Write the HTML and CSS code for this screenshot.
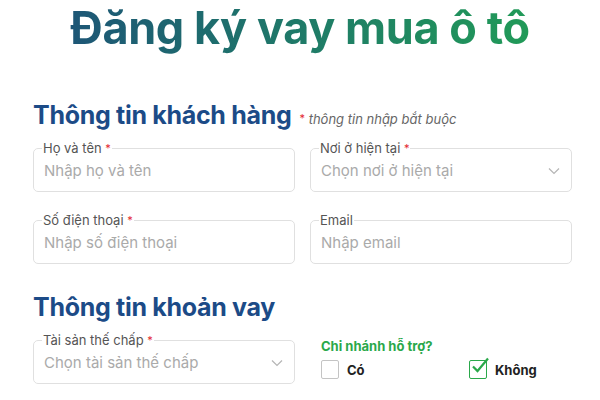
FILE: index.html
```html
<!DOCTYPE html>
<html lang="vi">
<head>
  <meta charset="UTF-8">
  <meta name="viewport" content="width=device-width, initial-scale=1.0">
  <title>Đăng ký vay mua ô tô</title>
  <link rel="stylesheet" href="styles.css">
</head>
<body>
  <h1 class="page-title"><span>Đăng ký vay mua ô tô</span></h1>

  <form class="loan-form">
    <div class="section-head">
      <h2>Thông tin khách hàng</h2>
      <span class="note"><i class="req">*</i> thông tin nhập bắt buộc</span>
    </div>

    <div class="grid">
      <fieldset class="field">
        <legend>Họ và tên <i class="req">*</i></legend>
        <input type="text" placeholder="Nhập họ và tên">
      </fieldset>
      <fieldset class="field">
        <legend>Nơi ở hiện tại <i class="req">*</i></legend>
        <div class="select">
          <span>Chọn nơi ở hiện tại</span>
          <svg width="12" height="8" viewBox="0 0 12 8"><path d="M1 1.5l5 5 5-5" fill="none" stroke="#b5b5b5" stroke-width="1.2"/></svg>
        </div>
      </fieldset>
      <fieldset class="field">
        <legend>Số điện thoại <i class="req">*</i></legend>
        <input type="text" placeholder="Nhập số điện thoại">
      </fieldset>
      <fieldset class="field">
        <legend>Email</legend>
        <input type="text" placeholder="Nhập email">
      </fieldset>
    </div>

    <div class="section-head section-loan">
      <h2>Thông tin khoản vay</h2>
    </div>

    <div class="grid">
      <fieldset class="field">
        <legend>Tài sản thế chấp <i class="req">*</i></legend>
        <div class="select">
          <span>Chọn tài sản thế chấp</span>
          <svg width="12" height="8" viewBox="0 0 12 8"><path d="M1 1.5l5 5 5-5" fill="none" stroke="#b5b5b5" stroke-width="1.2"/></svg>
        </div>
      </fieldset>
      <div class="support">
        <div class="support-title">Chi nhánh hỗ trợ?</div>
        <div class="choices">
          <label class="choice"><span class="box"></span>Có</label>
          <label class="choice"><span class="box checked"><svg width="22" height="20" viewBox="0 0 22 20"><path d="M5 10.5l4.5 4.5L20 2.5" fill="none" stroke="#2aa84a" stroke-width="2.2"/></svg></span>Không</label>
        </div>
      </div>
    </div>
  </form>
</body>
</html>
```

FILE: styles.css
```css
body {
  margin: 0;
  font-family: Inter, "Noto Sans", sans-serif;
  background: #fff;
}
.page-title {
  margin: 2px 0 0;
  text-align: center;
  font-size: 45px;
  line-height: 52px;
  font-weight: 700;
  letter-spacing: -0.4px;
}
.page-title span {
  background: linear-gradient(90deg, #1d5676 0%, #1f7a68 50%, #219a58 100%);
  -webkit-background-clip: text;
  background-clip: text;
  color: transparent;
}
.loan-form {
  padding: 0 28px 0 33px;
}
.section-head {
  display: flex;
  align-items: baseline;
  gap: 8px;
  margin-top: 45px;
}
.section-loan {
  margin-top: 27px;
}
.section-head h2 {
  margin: 0;
  font-size: 25px;
  line-height: 32px;
  font-weight: 700;
  color: #1c4b87;
  letter-spacing: -0.3px;
}
.note {
  font-size: 13px;
  font-style: italic;
  color: #666;
}
.req {
  color: #e3262f;
  font-style: normal;
  font-size: 11px;
  vertical-align: top;
}
.grid {
  display: grid;
  grid-template-columns: 262px 262px;
  column-gap: 15px;
  row-gap: 20px;
  margin-top: 9px;
}
.field {
  margin: 0;
  padding: 4px 10px 9px;
  border: 1px solid #e0e0e0;
  border-radius: 5px;
  min-width: 0;
}
.field legend {
  padding: 0 1px;
  margin-left: -2px;
  font-size: 13px;
  line-height: 16px;
  color: #555;
}
.field input {
  display: block;
  width: 100%;
  box-sizing: border-box;
  padding: 0;
  border: 0;
  outline: none;
  font-family: inherit;
  font-size: 15px;
  line-height: 22px;
  color: #333;
}
.field input::placeholder,
.select span {
  color: #aaa;
}
.select {
  display: flex;
  align-items: center;
  justify-content: space-between;
  font-size: 15px;
  line-height: 22px;
  padding-right: 1px;
}
.support {
  padding: 6px 0 0 11px;
}
.support-title {
  font-size: 13px;
  font-weight: 700;
  color: #2aa84a;
}
.choices {
  display: grid;
  grid-template-columns: 148px auto;
  margin-top: 6px;
}
.choice {
  display: flex;
  align-items: center;
  gap: 8px;
  font-size: 13px;
  font-weight: 700;
  color: #222;
}
.box {
  position: relative;
  width: 16px;
  height: 17px;
  border: 1.5px solid #c4c4c4;
  border-radius: 2px;
}
.box.checked {
  border-color: #2aa84a;
}
.box svg {
  position: absolute;
  left: -2px;
  top: -5px;
}
```
